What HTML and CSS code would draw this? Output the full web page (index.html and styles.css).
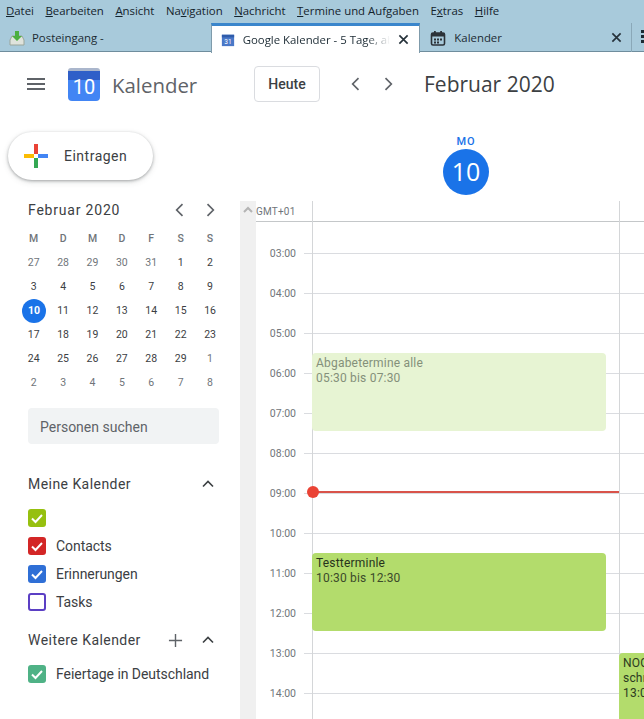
FILE: index.html
```html
<!DOCTYPE html>
<html lang="de">
<head>
  <meta charset="UTF-8" />
  <meta name="viewport" content="width=device-width, initial-scale=1.0" />
  <title>Kalender</title>
  <link rel="stylesheet" href="styles.css">
</head>
<body>
  <nav class="menubar">
    <span><u>D</u>atei</span>
    <span><u>B</u>earbeiten</span>
    <span><u>A</u>nsicht</span>
    <span>Na<u>v</u>igation</span>
    <span><u>N</u>achricht</span>
    <span><u>T</u>ermine und Aufgaben</span>
    <span>E<u>x</u>tras</span>
    <span><u>H</u>ilfe</span>
  </nav>

  <div class="tabbar">
    <div class="tab tab-inbox">
      <svg class="tab-icon" viewBox="0 0 16 16"><path d="M1 10l2-4h10l2 4v5H1z" fill="#dfe3dc" stroke="#9aa59a"/><path d="M6 1h4v5h3l-5 5-5-5h3z" fill="#4caf3f"/></svg>
      <span>Posteingang -</span>
    </div>
    <div class="tab tab-active">
      <svg class="tab-icon" viewBox="0 0 16 16"><rect x="1" y="2" width="14" height="13" fill="#4a78c8"/><rect x="1" y="2" width="14" height="3" fill="#2f5cab"/><text x="8" y="13" font-size="7.5" text-anchor="middle" fill="#fff" font-family="Roboto, sans-serif">31</text></svg>
      <span class="tab-title">Google Kalender - 5 Tage, ab</span>
      <svg class="tab-close" viewBox="0 0 12 12"><path d="M1.5 1.5l9 9M10.5 1.5l-9 9"/></svg>
    </div>
    <div class="tab tab-cal">
      <svg class="tab-icon" viewBox="0 0 16 16"><rect x="1.5" y="3" width="13" height="12" rx="1.5" fill="none" stroke="#2c3238" stroke-width="1.6"/><path d="M1.5 3h13v3.5h-13zM4 1h1.8v3H4zM10.2 1h1.8v3h-1.8z" fill="#2c3238"/><path d="M4 8.500h2v2H4zM7 8.500h2v2H7zM10 8.500h2v2h-2zM4 11.500h2v2H4zM7 11.500h2v2H7z" fill="#2c3238"/></svg>
      <span class="tab-title">Kalender</span>
      <svg class="tab-close" viewBox="0 0 12 12"><path d="M1.500 1.500l9 9M10.500 1.500l-9 9"/></svg>
    </div>
    <div class="tab-end"></div>
  </div>

  <header class="topbar">
    <div class="hamburger"><i></i><i></i><i></i></div>
    <div class="logo"><span>10</span></div>
    <div class="app-name">Kalender</div>
    <button class="today">Heute</button>
    <svg class="chev chev-prev" viewBox="0 0 24 24"><path d="M15 5l-7 7 7 7"/></svg>
    <svg class="chev chev-next" viewBox="0 0 24 24"><path d="M9 5l7 7-7 7"/></svg>
    <div class="period">Februar 2020</div>
  </header>

  <main class="content">
    <aside class="sidebar">
      <button class="create">
        <svg class="create-plus" viewBox="0 0 24 24">
          <rect x="10" y="0" width="4" height="10" fill="#ea4335"/>
          <rect x="14" y="10" width="10" height="4" fill="#4285f4"/>
          <rect x="10" y="14" width="4" height="10" fill="#34a853"/>
          <rect x="0" y="10" width="10" height="4" fill="#fbbc04"/>
        </svg>
        Eintragen
      </button>

      <div class="mini-head">
        <span>Februar 2020</span>
        <svg class="mini-chev" viewBox="0 0 24 24"><path d="M15 5l-7 7 7 7"/></svg>
        <svg class="mini-chev" viewBox="0 0 24 24"><path d="M9 5l7 7-7 7"/></svg>
      </div>
      <div class="mini-cal">
        <b>M</b><b>D</b><b>M</b><b>D</b><b>F</b><b>S</b><b>S</b>
        <span class="off">27</span><span class="off">28</span><span class="off">29</span><span class="off">30</span><span class="off">31</span><span>1</span><span>2</span>
        <span>3</span><span>4</span><span>5</span><span>6</span><span>7</span><span>8</span><span>9</span>
        <span class="now">10</span><span>11</span><span>12</span><span>13</span><span>14</span><span>15</span><span>16</span>
        <span>17</span><span>18</span><span>19</span><span>20</span><span>21</span><span>22</span><span>23</span>
        <span>24</span><span>25</span><span>26</span><span>27</span><span>28</span><span>29</span><span class="off">1</span>
        <span class="off">2</span><span class="off">3</span><span class="off">4</span><span class="off">5</span><span class="off">6</span><span class="off">7</span><span class="off">8</span>
      </div>

      <div class="people">Personen suchen</div>

      <div class="cal-head cal-head-mine">
        <span>Meine Kalender</span>
        <svg class="up" viewBox="0 0 24 24"><path d="M6 15l6-6 6 6"/></svg>
      </div>
      <ul class="cal-list">
        <li><span class="check c-lime"><svg viewBox="0 0 18 18"><path d="M4 9.500l3.500 3.500 6.500-7"/></svg></span></li>
        <li><span class="check c-red"><svg viewBox="0 0 18 18"><path d="M4 9.500l3.500 3.500 6.500-7"/></svg></span>Contacts</li>
        <li><span class="check c-blue"><svg viewBox="0 0 18 18"><path d="M4 9.500l3.500 3.500 6.500-7"/></svg></span>Erinnerungen</li>
        <li><span class="check c-empty"></span>Tasks</li>
      </ul>

      <div class="cal-head cal-head-more">
        <span>Weitere Kalender</span>
        <svg class="add" viewBox="0 0 16 16"><path d="M8 1v14M1 8h14"/></svg>
        <svg class="up" viewBox="0 0 24 24"><path d="M6 15l6-6 6 6"/></svg>
      </div>
      <ul class="cal-list">
        <li><span class="check c-green"><svg viewBox="0 0 18 18"><path d="M4 9.500l3.500 3.500 6.500-7"/></svg></span>Feiertage in Deutschland</li>
      </ul>
    </aside>

    <section class="calendar">
      <div class="day-head">
        <div class="day-name">MO</div>
        <div class="day-num">10</div>
      </div>
      <div class="grid-wrap">
        <div class="scroll-strip">
          <svg viewBox="0 0 12 12"><path d="M2 8l4-4 4 4"/></svg>
        </div>
        <div class="grid">
          <div class="gmt">GMT+01</div>
          <div class="spacer"></div>
          <div class="hour"><span>03:00</span></div>
          <div class="hour"><span>04:00</span></div>
          <div class="hour"><span>05:00</span></div>
          <div class="hour"><span>06:00</span></div>
          <div class="hour"><span>07:00</span></div>
          <div class="hour"><span>08:00</span></div>
          <div class="hour"><span>09:00</span></div>
          <div class="hour"><span>10:00</span></div>
          <div class="hour"><span>11:00</span></div>
          <div class="hour"><span>12:00</span></div>
          <div class="hour"><span>13:00</span></div>
          <div class="hour"><span>14:00</span></div>

          <div class="vline vline-1"></div>
          <div class="vline vline-2"></div>

          <div class="event ev-past">
            <strong>Abgabetermine alle</strong>
            05:30 bis 07:30
          </div>
          <div class="event ev-test">
            <strong>Testterminle</strong>
            10:30 bis 12:30
          </div>
          <div class="event ev-noc">
            NOC<br>schr<br>13:0
          </div>

          <div class="now-line"></div>
        </div>
      </div>
    </section>
  </main>
</body>
</html>
```

FILE: styles.css
```css
* {
  box-sizing: border-box;
  margin: 0;
  padding: 0;
}

body {
  font-family: "Roboto", sans-serif;
  background: #fff;
  color: #3c4043;
  display: flex;
  flex-direction: column;
  height: 100vh;
  overflow: hidden;
}

/* thunderbird chrome */
.menubar {
  display: flex;
  gap: 11.500px;
  height: 23px;
  padding: 1px 0 0 6px;
  background: #a8cadb;
  font-family: "Open Sans", sans-serif;
  font-size: 11.400px;
  line-height: 19px;
  color: #14232c;
  white-space: nowrap;
}

.tabbar {
  display: flex;
  height: 29px;
  background: #a8cadb;
  border-bottom: 1px solid #6f8d9d;
  font-family: "Open Sans", sans-serif;
  font-size: 11.400px;
  color: #1b2a33;
  white-space: nowrap;
}

.tab {
  display: flex;
  align-items: center;
  height: 29px;
  overflow: hidden;
}

.tab-inbox {
  width: 211px;
  padding-left: 9px;
  gap: 7px;
}

.tab-active {
  width: 210px;
  padding: 0 10px 0 9px;
  background: #fff;
  border-top: 3px solid #3a86cc;
  border-left: 1px solid #7f9bab;
  border-right: 1px solid #7f9bab;
  height: 30px;
  gap: 8px;
}

.tab-active .tab-icon {
  width: 14px;
}

.tab-cal {
  width: 212px;
  padding: 0 9px 0 10px;
  gap: 8px;
  border-right: 1px solid #8aa8b8;
}

.tab-icon {
  width: 16px;
  height: 16px;
  flex: none;
}

.tab-title {
  flex: 1;
  overflow: hidden;
}

.tab-active .tab-title {
  -webkit-mask-image: linear-gradient(to right, #000 84%, transparent);
  mask-image: linear-gradient(to right, #000 84%, transparent);
}

.tab-close {
  width: 11px;
  height: 11px;
  flex: none;
  fill: none;
  stroke: #26323a;
  stroke-width: 1.800;
}

.tab-end {
  flex: 1;
  margin: 7px 0 8px 9px;
  border-left: 3px dotted #1b2a33;
}

/* calendar header */
.topbar {
  display: flex;
  align-items: center;
  height: 68px;
  flex: none;
  padding: 0 0 4px 27px;
}

.hamburger {
  display: flex;
  flex-direction: column;
  gap: 3px;
  width: 18px;
}

.hamburger i {
  display: block;
  height: 2px;
  background: #5f6368;
}

.logo {
  width: 32px;
  height: 33px;
  margin-left: 23px;
  background: linear-gradient(#2f5fc8 0 30%, #4285f4 30%);
  border-radius: 3px 3px 4px 4px;
  border-top: 3px solid #aab6cc;
  color: #fff;
  font-size: 20px;
  text-align: center;
  line-height: 33px;
}

.app-name {
  margin-left: 12px;
  width: 142px;
  padding-top: 1px;
  font-family: "Open Sans", sans-serif;
  font-size: 20.400px;
  color: #5f6368;
}

.today {
  width: 66px;
  height: 36px;
  background: #fff;
  border: 1px solid #dadce0;
  border-radius: 4px;
  font-family: "Roboto", sans-serif;
  font-size: 14px;
  font-weight: 500;
  color: #3c4043;
}

.chev {
  width: 20px;
  height: 20px;
  fill: none;
  stroke: #5f6368;
  stroke-width: 2;
}

.chev-prev {
  margin-left: 26px;
}

.chev-next {
  margin-left: 12px;
}

.period {
  margin-left: 26px;
  font-family: "Open Sans", sans-serif;
  font-size: 21px;
  color: #3c4043;
  white-space: nowrap;
}

.content {
  flex: 1;
  display: flex;
  min-height: 0;
}

/* left column */
.sidebar {
  width: 240px;
  flex: none;
  padding-top: 12px;
}

.create {
  display: flex;
  align-items: center;
  width: 145px;
  height: 48px;
  margin-left: 8px;
  padding-left: 16px;
  gap: 16px;
  background: #fff;
  border: none;
  border-radius: 24px;
  box-shadow: 0 1px 3px rgba(60, 64, 67, 0.4), 0 2px 6px rgba(60, 64, 67, 0.15);
  font-family: "Roboto", sans-serif;
  font-size: 14px;
  letter-spacing: 0.5px;
  color: #3c4043;
}

.create-plus {
  width: 24px;
  height: 24px;
}

.mini-head {
  display: flex;
  align-items: center;
  gap: 10px;
  margin: 20px 20px 0 28px;
  font-size: 14px;
  letter-spacing: 0.800px;
  color: #3c4043;
}

.mini-head span {
  flex: 1;
}

.mini-chev {
  width: 20px;
  height: 20px;
  fill: none;
  stroke: #5f6368;
  stroke-width: 2;
}

.mini-cal {
  display: grid;
  grid-template-columns: repeat(7, 29.4px);
  grid-auto-rows: 24px;
  margin: 7px 0 0 19px;
  font-size: 10.500px;
  text-align: center;
  line-height: 24px;
  color: #3c4043;
}

.mini-cal b {
  font-weight: 500;
  color: #70757a;
}

.mini-cal .off {
  color: #70757a;
}

.mini-cal .now {
  width: 24px;
  height: 24px;
  margin-left: 3px;
  border-radius: 50%;
  background: #1a73e8;
  color: #fff;
  font-weight: 700;
}

.people {
  width: 191px;
  height: 36px;
  margin: 13px 0 0 28px;
  padding-left: 12px;
  background: #f1f3f4;
  border-radius: 4px;
  font-size: 14px;
  line-height: 38px;
  color: #5f6368;
}

.cal-head {
  display: flex;
  align-items: center;
  height: 24px;
  padding: 0 22px 0 28px;
  font-size: 14px;
  letter-spacing: 0.450px;
  color: #3c4043;
}

.cal-head span {
  flex: 1;
}

.cal-head-mine {
  margin-top: 28px;
}

.cal-head-more {
  margin-top: 12px;
}

.up {
  width: 20px;
  height: 20px;
  fill: none;
  stroke: #3c4043;
  stroke-width: 2;
}

.add {
  width: 15px;
  height: 15px;
  margin-right: 15px;
  fill: none;
  stroke: #5f6368;
  stroke-width: 1.500;
}

.cal-list {
  list-style: none;
  margin-top: 8px;
}

.cal-list li {
  display: flex;
  align-items: center;
  gap: 10px;
  height: 28px;
  padding-left: 28px;
  font-size: 14px;
  letter-spacing: -0.050px;
  color: #3c4043;
}

.check {
  display: block;
  width: 18px;
  height: 18px;
  border-radius: 3px;
  flex: none;
}

.check svg {
  display: block;
  fill: none;
  stroke: #fff;
  stroke-width: 2;
}

.c-lime { background: #96c00f; }
.c-red { background: #d32626; }
.c-blue { background: #2f6fd6; }
.c-green { background: #4fb286; }
.c-empty { border: 2px solid #5b3fc4; }

/* week view */
.calendar {
  flex: 1;
  display: flex;
  flex-direction: column;
  min-width: 0;
}

.day-head {
  height: 81px;
  flex: none;
  padding-left: 73px;
  width: 379px;
  margin-left: 0;
  display: flex;
  flex-direction: column;
  align-items: center;
}

.day-name {
  margin-top: 15px;
  font-size: 11px;
  font-weight: 500;
  letter-spacing: 1px;
  line-height: 13px;
  color: #1a73e8;
}

.day-num {
  width: 46px;
  height: 46px;
  margin-top: 1px;
  border-radius: 50%;
  background: #1a73e8;
  color: #fff;
  font-family: "Open Sans", sans-serif;
  font-size: 25px;
  line-height: 44px;
  text-align: center;
}

.grid-wrap {
  flex: 1;
  display: flex;
  min-height: 0;
}

.scroll-strip {
  width: 16px;
  flex: none;
  background: #f0f0f0;
}

.scroll-strip svg {
  display: block;
  width: 12px;
  height: 12px;
  margin: 3px 0 0 2px;
  fill: none;
  stroke: #b4b4b4;
  stroke-width: 2;
}

.grid {
  flex: 1;
  position: relative;
  overflow: hidden;
}

.gmt {
  height: 21px;
  border-bottom: 1px solid #c4c7c9;
  font-size: 10px;
  letter-spacing: 0.2px;
  line-height: 21px;
  color: #70757a;
}

.spacer {
  height: 31px;
}

.hour {
  position: relative;
  height: 40px;
  margin-left: 48px;
  border-top: 1px solid #dadce0;
}

.hour span {
  position: absolute;
  top: -7px;
  right: 348px;
  font-size: 10.500px;
  line-height: 14px;
  color: #70757a;
  white-space: nowrap;
}

.vline {
  position: absolute;
  top: 0;
  bottom: 0;
  width: 1px;
  background: #d4d6d8;
}

.vline-1 {
  left: 56px;
}

.vline-2 {
  left: 363px;
}

.event {
  position: absolute;
  padding: 3px 4px;
  border-radius: 4px;
  font-size: 12px;
  letter-spacing: 0.200px;
  line-height: 15px;
}

.event strong {
  display: block;
  font-weight: 400;
  letter-spacing: 0.200px;
}

.ev-past {
  left: 56px;
  top: 152px;
  width: 294px;
  height: 78px;
  background: #e7f4d3;
  color: #84907a;
}

.ev-test {
  left: 56px;
  top: 352px;
  width: 294px;
  height: 78px;
  background: #b3dc6c;
  color: #3b4a2a;
}

.ev-test strong {
  color: #27331c;
}

.ev-noc {
  left: 363px;
  top: 452px;
  width: 120px;
  height: 80px;
  background: #b3dc6c;
  color: #2c3a1f;
}

.now-line {
  position: absolute;
  left: 57px;
  top: 290px;
  width: 306px;
  height: 2px;
  background: #d9534a;
}

.now-line::before {
  content: "";
  position: absolute;
  left: -6px;
  top: -5px;
  width: 12px;
  height: 12px;
  border-radius: 50%;
  background: #ea4335;
}
```
